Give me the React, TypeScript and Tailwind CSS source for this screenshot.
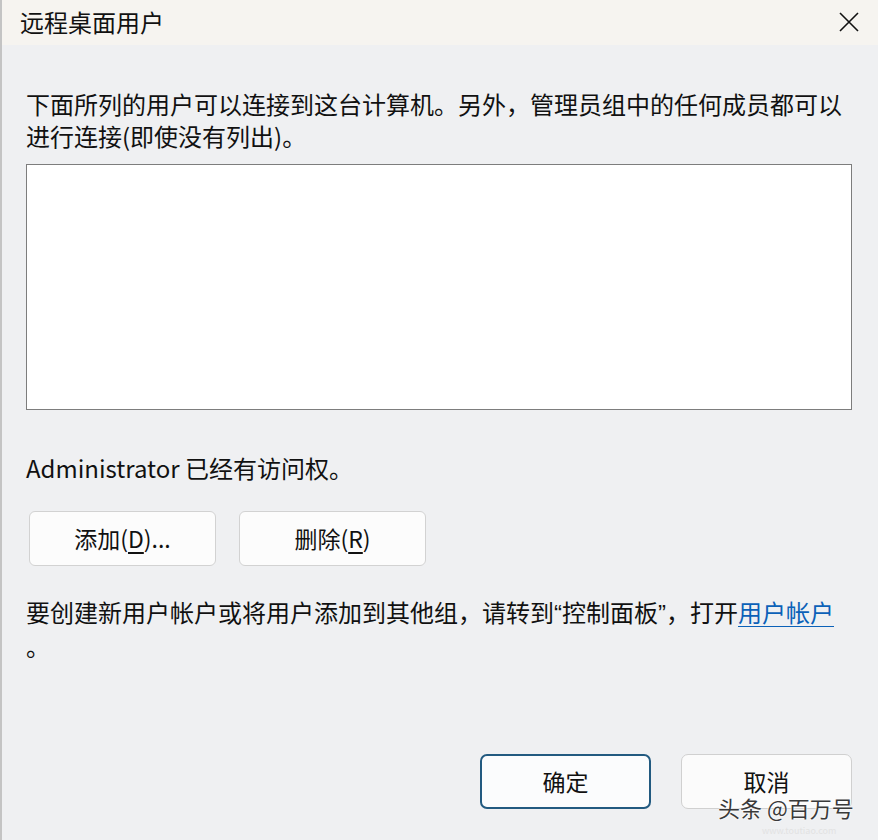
import React from "react";

const font = { fontFamily: '"Noto Sans CJK SC", "Noto Sans", sans-serif' };

export default function App() {
  return (
    <div
      className="relative w-[878px] h-[840px] overflow-hidden bg-[#eff0f2] text-[#111111] flex flex-col border-l-2 border-[#c4c4c4]"
      style={font}
    >
      {/* Title bar */}
      <div className="h-[45px] bg-[#f6f4f0] flex items-center justify-between pl-[18px] pr-[18px] shrink-0">
        <span className="text-[24px] leading-none mt-[-2px]">远程桌面用户</span>
        <svg width="22" height="22" viewBox="0 0 22 22" className="mt-[-2px]">
          <path d="M2 2 L20 20 M20 2 L2 20" stroke="#111111" strokeWidth="1.6" fill="none" />
        </svg>
      </div>

      <div className="flex flex-col flex-1 pl-[24px] pr-[26px]">
        <p className="mt-[43px] text-[24px] leading-[32px] whitespace-nowrap">
          下面所列的用户可以连接到这台计算机。另外，管理员组中的任何成员都可以
          <br />
          进行连接(即使没有列出)。
        </p>

        <div className="mt-[12px] h-[246px] bg-white border border-[#7d7d7d]" />

        <p className="mt-[42px] text-[24px] leading-[32px]">Administrator 已经有访问权。</p>

        <div className="mt-[27px] flex gap-[23px] pl-[3px]">
          <button className="w-[187px] h-[55px] rounded-[6px] border border-[#d2d2d2] bg-[#fcfcfc] text-[23px]">
            添加(<span className="underline underline-offset-4">D</span>)...
          </button>
          <button className="w-[187px] h-[55px] rounded-[6px] border border-[#d2d2d2] bg-[#fcfcfc] text-[23px]">
            删除(<span className="underline underline-offset-4">R</span>)
          </button>
        </div>

        <p className="mt-[30px] text-[24px] leading-[32px] whitespace-nowrap">
          要创建新用户帐户或将用户添加到其他组，请转到
          <span style={{ fontFamily: '"Liberation Sans", sans-serif' }}>“</span>
          控制面板
          <span style={{ fontFamily: '"Liberation Sans", sans-serif' }}>”</span>
          ，打开
          <span className="text-[#0b61b8] underline underline-offset-[4px] decoration-1">用户帐户</span>
          <br />。
        </p>

        <div className="flex-1" />

        <div className="flex justify-end gap-[30px] pb-[31px]">
          <button className="w-[171px] h-[55px] rounded-[7px] border-2 border-[#225a80] bg-[#fbfcfd] text-[23px]">
            确定
          </button>
          <button className="w-[171px] h-[55px] rounded-[7px] border border-[#d0d0d0] bg-[#fbfbfb] text-[23px]">
            取消
          </button>
        </div>
      </div>

      {/* Watermark overlay */}
      <div className="absolute left-[716px] top-[796px] text-[22px] leading-none text-[#3a3a3a] [text-shadow:0_0_2px_#ffffff,0_0_2px_#ffffff]">
        头条 @百万号
      </div>
      <div className="absolute left-[760px] top-[826px] text-[9px] leading-none text-[#e2e2e2]">
        www.toutiao.com
      </div>
    </div>
  );
}
